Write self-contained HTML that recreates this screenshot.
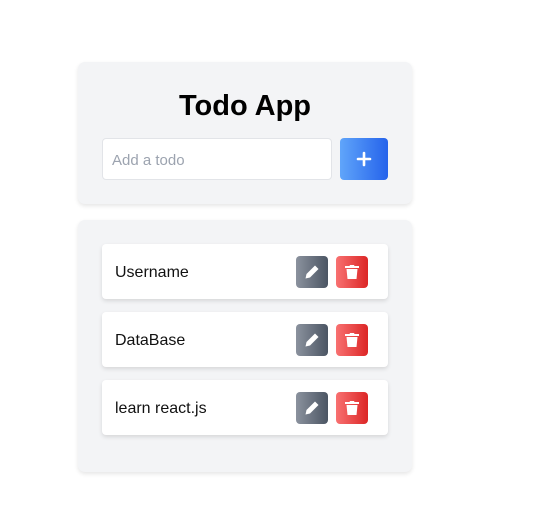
<!DOCTYPE html>
<html><head><meta charset="utf-8"><style>
*{box-sizing:border-box;margin:0;padding:0}
body{width:546px;height:529px;background:#fff;font-family:"Liberation Sans","DejaVu Sans",sans-serif;position:relative}
.card{position:absolute;left:78px;width:334px;background:#f3f4f6;border-radius:7px;box-shadow:0 2px 4px rgba(0,0,0,.1)}
h1{position:absolute;top:28px;left:0;width:100%;text-align:center;font-size:29px;font-weight:bold;color:#000}
.inp{position:absolute;left:24px;top:76px;width:230px;height:42px;background:#fff;border:1px solid #e2e4e8;border-radius:4px;font-size:15px;color:#9ca3af;padding:13px 9px}
.add{position:absolute;left:262px;top:76px;width:48px;height:42px;border-radius:4px;background:linear-gradient(90deg,#60a5fa,#2563eb)}
.item{position:absolute;left:24px;width:286px;height:55px;background:#fff;border-radius:4px;box-shadow:0 2px 4px rgba(0,0,0,.12)}
.item span{position:absolute;left:13px;top:20px;font-size:16px;color:#111}
.b{position:absolute;top:12px;width:32px;height:32px;border-radius:4px;display:flex;align-items:center;justify-content:center}
.e{left:194px;background:linear-gradient(90deg,#8b929e,#4b5563)}
.d{left:234px;background:linear-gradient(90deg,#f87171,#dc2626)}
</style></head><body>
<div class="card" style="top:62px;height:142px">
<h1>Todo App</h1>
<div class="inp">Add a todo</div>
<div class="add"><svg width="48" height="42"><path d="M24 15v12M18 21h12" stroke="#fff" stroke-width="2.6" stroke-linecap="round"/></svg></div>
</div>
<div class="card" style="top:220px;height:252px">
<div class="item" style="top:24px"><span>Username</span>
<div class="b e"><svg width="16" height="16" viewBox="0 0 16 16"><path d="M11 1.5l3.5 3.5-8.5 8.5-4.5 1 1-4.5z" fill="#fff"/></svg></div>
<div class="b d"><svg width="14" height="16" viewBox="0 0 14 16"><path d="M0 2h4.5l.5-1h4l.5 1H14v2H0z M1.5 5h11l-1 10h-9z" fill="#fff"/></svg></div></div>
<div class="item" style="top:92px"><span>DataBase</span>
<div class="b e"><svg width="16" height="16" viewBox="0 0 16 16"><path d="M11 1.5l3.5 3.5-8.5 8.5-4.5 1 1-4.5z" fill="#fff"/></svg></div>
<div class="b d"><svg width="14" height="16" viewBox="0 0 14 16"><path d="M0 2h4.5l.5-1h4l.5 1H14v2H0z M1.5 5h11l-1 10h-9z" fill="#fff"/></svg></div></div>
<div class="item" style="top:160px"><span>learn react.js</span>
<div class="b e"><svg width="16" height="16" viewBox="0 0 16 16"><path d="M11 1.5l3.5 3.5-8.5 8.5-4.5 1 1-4.5z" fill="#fff"/></svg></div>
<div class="b d"><svg width="14" height="16" viewBox="0 0 14 16"><path d="M0 2h4.5l.5-1h4l.5 1H14v2H0z M1.5 5h11l-1 10h-9z" fill="#fff"/></svg></div></div>
</div>
</body></html>
